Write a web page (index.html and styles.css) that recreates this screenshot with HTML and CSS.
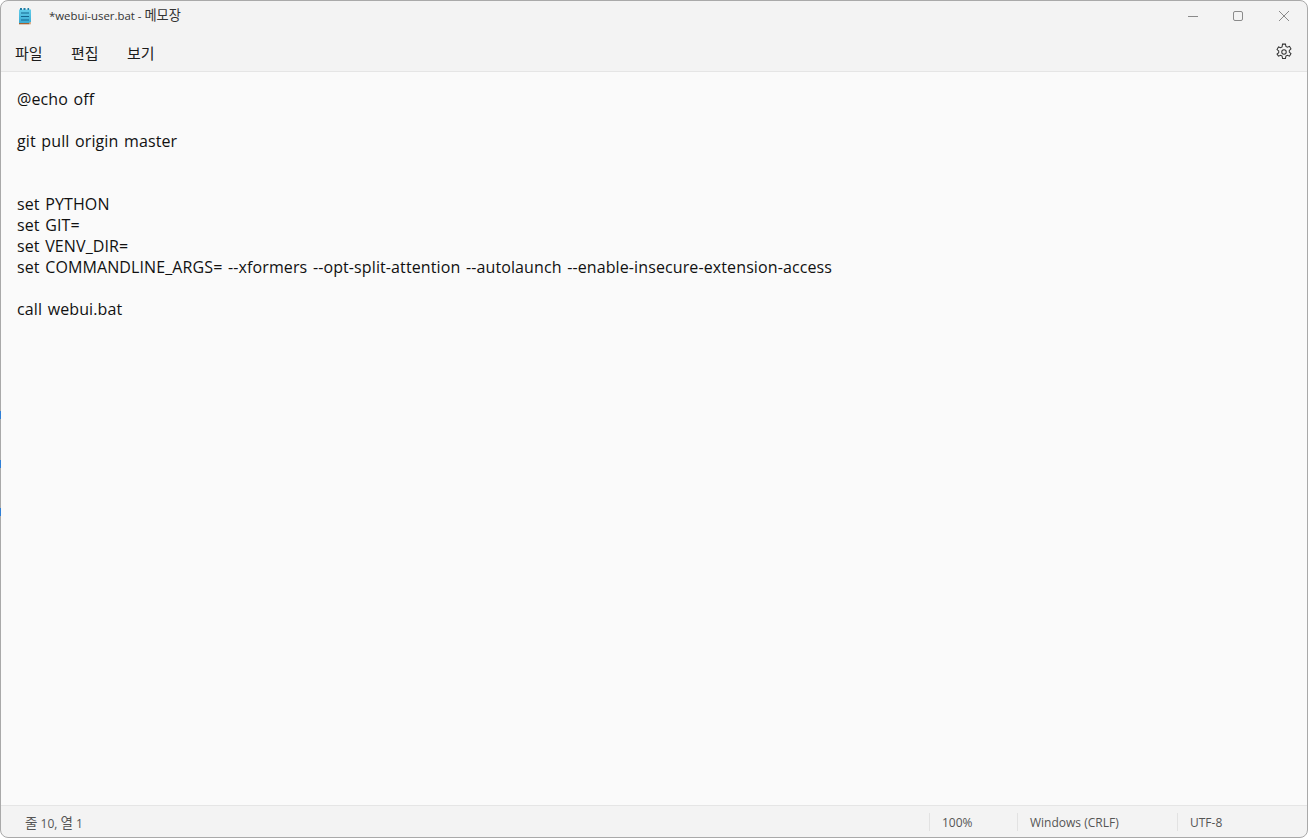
FILE: index.html
```html
<!DOCTYPE html>
<html lang="ko">
<head>
<meta charset="utf-8">
<title>*webui-user.bat - 메모장</title>
<link rel="stylesheet" href="styles.css">
</head>
<body>
<div class="window">
  <header class="titlebar">
    <svg class="app-icon" viewBox="0 0 12 17" width="12" height="17">
      <defs>
        <linearGradient id="pad" x1="0" y1="0" x2="0" y2="1">
          <stop offset="0" stop-color="#62cdea"/>
          <stop offset="1" stop-color="#38a9d2"/>
        </linearGradient>
      </defs>
      <rect x="0" y="1.500" width="12" height="14" fill="url(#pad)"/>
      <rect x="1" y="0" width="2" height="2" fill="#1f7ea6"/>
      <rect x="4.500" y="0" width="2" height="2" fill="#1f7ea6"/>
      <rect x="8.500" y="0" width="1.600" height="2" fill="#1f7ea6"/>
      <path d="M2 5h8M2 8.500h8M2 12h8" stroke="#15668f" stroke-width="1.100"/>
      <rect x="0" y="15" width="10.500" height="1.300" fill="#a5622f"/>
      <rect x="10.500" y="14" width="1.500" height="2.300" fill="#d7b090"/>
    </svg>
    <span class="title">*webui-user.bat - <span class="title-ko">메모장</span></span>
    <div class="controls">
      <svg class="ctl" viewBox="0 0 46 30" width="46" height="30"><path d="M19 15.500h10" stroke="#8a8a8a" stroke-width="1"/></svg>
      <svg class="ctl" viewBox="0 0 46 30" width="46" height="30"><rect x="18.500" y="10.500" width="9" height="9" rx="1.500" fill="none" stroke="#8a8a8a" stroke-width="1"/></svg>
      <svg class="ctl" viewBox="0 0 46 30" width="46" height="30"><path d="M18 10l10 10M28 10l-10 10" stroke="#8a8a8a" stroke-width="1"/></svg>
    </div>
  </header>
  <nav class="menubar">
    <span class="menu">파일</span>
    <span class="menu">편집</span>
    <span class="menu">보기</span>
    <svg class="gear" viewBox="0 0 16 16" width="18" height="18">
      <path d="M6.700 1h2.600l.4 2 1.300.7 1.900-.7 1.300 2.300-1.500 1.300v1.500l1.500 1.300-1.300 2.300-1.900-.7-1.300.7-.4 2H6.700l-.4-2-1.300-.7-1.900.7L1.800 9.900l1.500-1.300V7.100L1.800 5.800 3.100 3.500l1.900.7 1.300-.7z" fill="none" stroke="#333" stroke-width=".9"/>
      <circle cx="8" cy="7.900" r="2" fill="none" stroke="#333" stroke-width=".9"/>
    </svg>
  </nav>
  <main class="editor"><pre class="text">@echo off

git pull origin master


set PYTHON
set GIT=
set VENV_DIR=
set COMMANDLINE_ARGS= --xformers --opt-split-attention --autolaunch --enable-insecure-extension-access

call webui.bat</pre></main>
  <footer class="statusbar">
    <span class="pos"><span class="ko">줄</span> 10, <span class="ko">열</span> 1</span>
    <span class="cell zoom">100%</span>
    <span class="cell eol">Windows (CRLF)</span>
    <span class="cell enc">UTF-8</span>
  </footer>
</div>
<i class="edge edge-a"></i>
<i class="edge edge-b"></i>
<i class="edge edge-c"></i>
</body>
</html>
```

FILE: styles.css
```css
* { box-sizing: border-box; }
html, body { margin: 0; height: 100%; background: #fff; }
body { width: 1308px; height: 838px; overflow: hidden; font-family: "Noto Sans CJK KR", "Noto Sans", sans-serif; }
.window {
  width: 1308px; height: 838px;
  display: flex; flex-direction: column;
  background: #f3f3f3;
  border: 1px solid #a9a9a9;
  border-radius: 8px;
  overflow: hidden;
}
.titlebar { height: 29px; display: flex; align-items: center; padding-left: 18px; flex: none; }
.app-icon { flex: none; margin-top: 1px; }
.title { margin: 0 0 2px 18px; font: 11.4px "Open Sans", "Noto Sans CJK KR", sans-serif; color: #333; }
.title-ko { font-size: 13.200px; }
.controls { margin-left: auto; display: flex; }
.ctl { display: block; }
.menubar { height: 42px; flex: none; display: flex; align-items: center; padding: 3px 14px 0 14px; border-bottom: 1px solid #e5e5e5; }
.menu { width: 56px; font: 15px "Noto Sans CJK KR", sans-serif; color: #1c1c1c; }
.gear { margin-left: auto; }
.editor { flex: 1; background: #fafafa; padding: 17px 16px 0; min-height: 0; }
.text { margin: 0; font: 16px/21px "Open Sans", "Noto Sans CJK KR", sans-serif; letter-spacing: .11px; word-spacing: 1.300px; color: #111; white-space: pre; }
.statusbar { height: 32px; flex: none; display: flex; align-items: center; border-top: 1px solid #e5e5e5; font: 12px "Open Sans", "Noto Sans CJK KR", sans-serif; color: #555; }
.pos { padding-left: 24px; margin-right: auto; }
.ko { font-size: 13.500px; }
.cell { height: 18px; line-height: 20px; padding-left: 12px; border-left: 1px solid #e2e2e2; }
.zoom { width: 88px; }
.eol { width: 160px; }
.enc { width: 130px; }
.edge { position: absolute; left: 0; width: 1px; background: #2f7fd6; }
.edge-a { top: 411px; height: 8px; }
.edge-b { top: 460px; height: 8px; }
.edge-c { top: 508px; height: 8px; }
```
